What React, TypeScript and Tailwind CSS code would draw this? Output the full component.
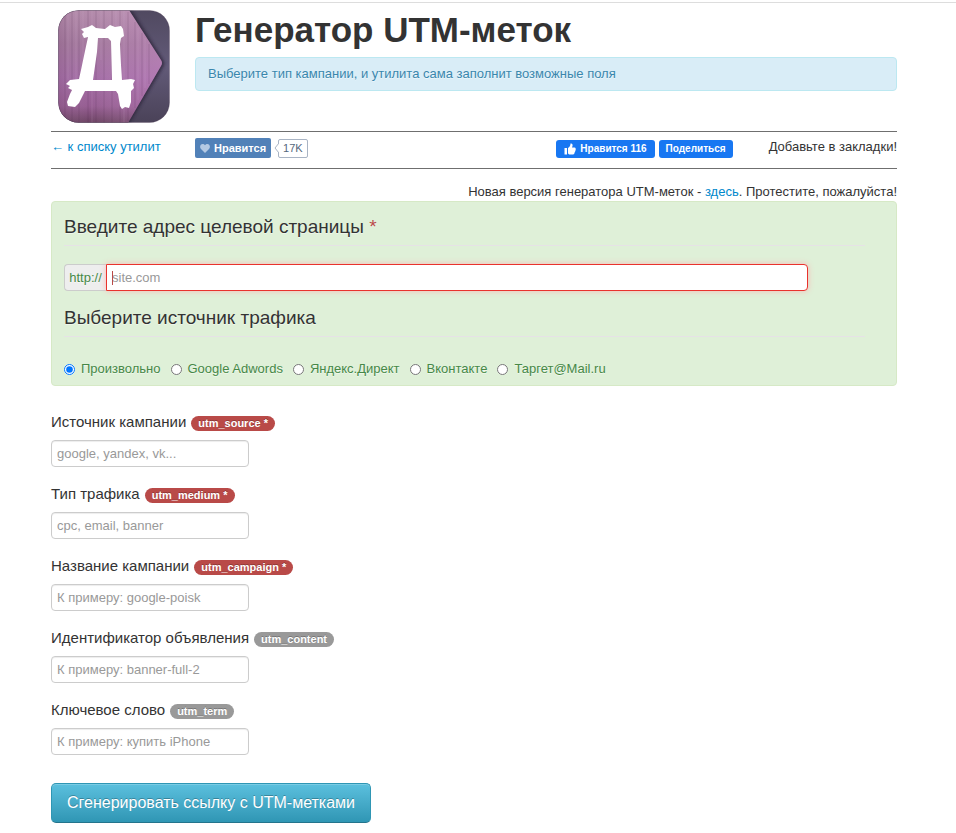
import React from "react";

type Field = {
  id: string;
  label: string;
  placeholder: string;
  required: boolean;
};

const fields: Field[] = [
  { id: "utm_source", label: "Источник кампании", placeholder: "google, yandex, vk...", required: true },
  { id: "utm_medium", label: "Тип трафика", placeholder: "cpc, email, banner", required: true },
  { id: "utm_campaign", label: "Название кампании", placeholder: "К примеру: google-poisk", required: true },
  { id: "utm_content", label: "Идентификатор объявления", placeholder: "К примеру: banner-full-2", required: false },
  { id: "utm_term", label: "Ключевое слово", placeholder: "К примеру: купить iPhone", required: false },
];

const sources = ["Произвольно", "Google Adwords", "Яндекс.Директ", "Вконтакте", "Таргет@Mail.ru"];

function Logo() {
  return (
    <svg viewBox="0 0 112 113" className="h-[113px] w-28" role="img" aria-label="Логотип">
      <defs>
        <linearGradient id="wood" x1="0" y1="0" x2="0" y2="1">
          <stop offset="0" stopColor="#b48bab" />
          <stop offset="0.3" stopColor="#a3779d" />
          <stop offset="0.6" stopColor="#a36ca5" />
          <stop offset="0.85" stopColor="#965d92" />
          <stop offset="1" stopColor="#6b4262" />
        </linearGradient>
        <linearGradient id="slate" x1="0" y1="0" x2="0" y2="1">
          <stop offset="0" stopColor="#504960" />
          <stop offset="0.5" stopColor="#625a78" />
          <stop offset="1" stopColor="#4a4258" />
        </linearGradient>
        <linearGradient id="shine" x1="0" y1="0" x2="1" y2="0">
          <stop offset="0" stopColor="#5b2f52" stopOpacity="0.15" />
          <stop offset="0.3" stopColor="#fff" stopOpacity="0" />
          <stop offset="0.7" stopColor="#e0a8e0" stopOpacity="0.15" />
          <stop offset="1" stopColor="#d79ad7" stopOpacity="0.3" />
        </linearGradient>
        <clipPath id="tile">
          <rect x="0.5" y="0.5" width="111" height="112" rx="20" />
        </clipPath>
        <filter id="edge" x="-20%" y="-20%" width="140%" height="140%">
          <feGaussianBlur stdDeviation="1.5" />
        </filter>
      </defs>
      <g clipPath="url(#tile)">
        <rect width="112" height="113" fill="url(#slate)" />
        <path d="M0 0H74L106 51q1 3 0 5L72 113H0Z" fill="#2b2338" opacity="0.7" filter="url(#edge)" />
        <path d="M0 0H71L103 50q2 3 0 6L70 113H0Z" fill="url(#wood)" />
        <path d="M0 0H71L103 50q2 3 0 6L70 113H0Z" fill="url(#shine)" />
        <path
          d="M7 0V113M14 0V113M21 0V113M30 0V113M38 0V113M46 0V113M54 0V113M62 0V113M70 2V111M77 12V98M84 23V86M91 34V74"
          stroke="#4f2848"
          strokeWidth="0.8"
          opacity="0.22"
        />
        <path
          d="M10 0V70M18 0V90M25 0V60M34 0V113M43 0V50M58 0V80M66 0V113M80 18V90M87 28V78"
          stroke="#d9b1d2"
          strokeWidth="0.9"
          opacity="0.2"
        />
        <path
          fill="#fff"
          fillRule="evenodd"
          d="M23 19L30 17L34 15L38 18L47 19L52 15L57 17L63 16L65 19L66 26L63 28L62 34L63 55L64 70L73 69L77 70L75 74L76 78L73 81L73 92L71 98L67 97L64 99L62 96L60 84L58 81H27L25 85L21 93L17 97L10 96L9 92L12 84L14 80L10 78L12 76L8 74L12 70L21 69L23 60L27 41L30 27L26 28L24 24L26 22ZM40 28L39 42L35 70H54L53 31L50 28Z"
        />
      </g>
      <rect x="0.5" y="0.5" width="111" height="112" rx="20" fill="none" stroke="#4a3550" strokeOpacity="0.25" />
    </svg>
  );
}

function Header() {
  return (
    <header className="flex pt-[7px] pl-[7px]">
      <div className="w-[137px] shrink-0">
        <Logo />
      </div>
      <div className="min-w-0 flex-1">
        <h1 className="text-[35px] leading-10 font-bold">Генератор UTM-меток</h1>
        <p className="mt-[7px] rounded border border-[#bce8f1] bg-[#d9edf7] px-3 py-[7px] text-[13px] leading-[18px] text-[#3a87ad] [text-shadow:0_1px_0_rgba(255,255,255,0.5)]">
          Выберите тип кампании, и утилита сама заполнит возможные поля
        </p>
      </div>
    </header>
  );
}

function SocialBar() {
  return (
    <nav className="mt-2 flex h-[38px] items-start border-y border-[#6f6f6f] text-[13px] leading-[18px]">
      <a href="#utilities" className="mt-[6px] w-36 shrink-0 text-[#0088cc]">
        ← к списку утилит
      </a>
      <div className="mt-[6px] flex items-center">
        <button type="button" className="flex h-5 items-center gap-1 rounded-[2px] bg-[#5181b8] px-[5px] text-[11px] font-bold text-white">
          <svg viewBox="0 0 10 9" className="h-[9px] w-[10px] fill-[#b4c9e3]" aria-hidden="true">
            <path d="M5 9L1 5C-.8 3 .3 0 2.7 0 3.800 0 4.600.6 5 1.300 5.400.6 6.200 0 7.300 0 9.700 0 10.800 3 9 5Z" />
          </svg>
          Нравится
        </button>
        <svg viewBox="0 0 5 10" className="z-10 -mr-px ml-[3px] h-[10px] w-[5px]" aria-hidden="true">
          <path d="M5 0L1 5L5 10" fill="#fff" stroke="#a9b4c4" />
        </svg>
        <span className="flex h-[19px] items-center rounded-[2px] border border-[#a9b4c4] px-1 text-[11px] text-[#55677d]">17K</span>
      </div>
      <div className="mt-2 ml-auto flex gap-1 text-[10px] font-bold text-white">
        <button type="button" className="flex h-[18px] items-center gap-1 rounded-[3px] bg-[#1877f2] px-2">
          <svg viewBox="0 0 24 24" className="h-3 w-3 fill-white" aria-hidden="true">
            <path d="M1 10h5v13H1zM8 10c3-2 5-5 5-9 3-1 5 2 4 5l-1 3h5c2 0 3 2 2 3 1 1 1 3-1 4 1 1 0 3-1 3 0 2-1 4-3 4h-6c-2 0-3-1-4-2z" />
          </svg>
          Нравится 116
        </button>
        <button type="button" className="flex h-[18px] items-center rounded-[3px] bg-[#1877f2] px-[7px]">
          Поделиться
        </button>
      </div>
      <span className="mt-[6px] ml-9">Добавьте в закладки!</span>
    </nav>
  );
}

function TargetPanel() {
  return (
    <section className="rounded border border-[#d6e9c6] bg-[#dff0d8] px-3 pt-[6px] pb-[7px] text-[13px] text-[#468847] [text-shadow:0_1px_0_rgba(255,255,255,0.5)]">
      <div className="mr-[19px]">
        <label htmlFor="url" className="block h-[38px] border-b border-[#e6e2e6] text-[19px] leading-[37px] text-[#333]">
          Введите адрес целевой страницы <span className="text-[#b94a48]">*</span>
        </label>
      </div>
      <div className="mt-[18px] flex h-[27px] w-[744px] max-w-full">
        <span className="flex w-[42px] items-center justify-center rounded-l border border-r-0 border-[#ccc] bg-[#eee]">http://</span>
        <div className="relative flex min-w-0 flex-1">
          <input
            id="url"
            type="text"
            autoFocus
            placeholder="site.com"
            className="peer min-w-0 flex-1 rounded-r border border-[#e9322d] bg-white px-[5px] text-[#b94a48] caret-transparent shadow-[0_0_6px_#f8b9b7] outline-none placeholder:text-[#999]"
          />
          <span aria-hidden="true" className="absolute top-[7px] left-[6px] hidden h-[14px] w-px bg-[#b94a48] peer-placeholder-shown:block" />
        </div>
      </div>
      <fieldset>
        <legend className="w-full pt-2 pr-[19px]">
          <span className="block border-b border-[#e6e2e6] text-[19px] leading-[37px] text-[#333]">Выберите источник трафика</span>
        </legend>
        <div className="mt-[23px] flex flex-wrap gap-x-[10px]">
          {sources.map((name, i) => (
            <label key={name} className="flex items-center gap-[6px] leading-[18px]">
              <input type="radio" name="source" defaultChecked={i === 0} className="m-0 h-[11px] w-[11px]" />
              {name}
            </label>
          ))}
        </div>
      </fieldset>
    </section>
  );
}

function UtmField({ id, label, placeholder, required }: Field) {
  return (
    <div className="flex h-[72px] flex-col items-start">
      <label htmlFor={id} className="flex items-center gap-[5px] text-[15px] leading-[18px]">
        {label}
        <span
          className={
            "mt-[3px] rounded-full px-[7px] text-[11px] leading-[15px] font-bold text-white [text-shadow:0_-1px_0_rgba(0,0,0,0.25)] " +
            (required ? "bg-[#b94a48]" : "bg-[#999]")
          }
        >
          {id}
          {required ? " *" : ""}
        </span>
      </label>
      <input
        id={id}
        type="text"
        placeholder={placeholder}
        className="mt-[9px] h-[27px] w-[198px] rounded border border-[#ccc] bg-white px-[5px] text-[13px] shadow-[inset_0_1px_1px_rgba(0,0,0,0.075)] placeholder:text-[#999]"
      />
    </div>
  );
}

export default function App() {
  return (
    <div className="mt-[2px] border-t border-[#ddd] bg-white font-['Liberation_Sans',Arial,sans-serif] text-[#333]">
      <main className="pr-[59px] pl-[51px]">
        <Header />
        <SocialBar />
        <p className="mt-[14px] text-right text-[13px] leading-[18px]">
          Новая версия генератора UTM-меток -{" "}
          <a href="#new" className="text-[#0088cc]">
            здесь
          </a>
          . Протестите, пожалуйста!
        </p>
        <form onSubmit={(e: React.FormEvent) => e.preventDefault()}>
          <TargetPanel />
          <div className="mt-[27px]">
            {fields.map((f) => (
              <UtmField key={f.id} {...f} />
            ))}
          </div>
          <button
            type="submit"
            className="mt-[10px] h-10 rounded-[5px] border border-[#2f96b4] border-b-[#24748c] bg-linear-to-b from-[#5bc0de] to-[#2f96b4] px-[15px] text-base text-white shadow-[inset_0_1px_0_rgba(255,255,255,0.2)] [text-shadow:0_-1px_0_rgba(0,0,0,0.25)]"
          >
            Сгенерировать ссылку с UTM-метками
          </button>
        </form>
      </main>
    </div>
  );
}
